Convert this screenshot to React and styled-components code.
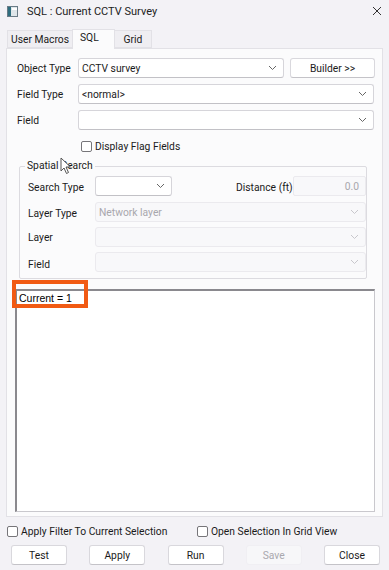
import React from 'react'
import styled, { createGlobalStyle } from 'styled-components'

const Global = createGlobalStyle`
	html, body {
		margin: 0;
		padding: 0;
		background: #f3f2f6;
	}
	body {
		font-family: Roboto, 'Noto Sans', sans-serif;
		font-size: 10.3px;
		color: #1a1a1a;
	}
`

const Window = styled.div`
	position: relative;
	width: 389px;
	height: 570px;
	background: #f3f2f6;
	display: flex;
	flex-direction: column;
	overflow: hidden;
`

const TitleBar = styled.div`
	height: 22px;
	display: flex;
	align-items: center;
	padding: 0 0 0 7px;
	gap: 9px;
	font-size: 11px;
	color: #222;
`

const TitleText = styled.span`
	flex: 1;
`

const CloseX = styled.div`
	width: 22px;
	display: flex;
	justify-content: center;
	margin-right: 1px;
`

const TabStrip = styled.div`
	display: flex;
	align-items: flex-end;
	padding: 7px 0 0 8px;
	height: 19px;
`

const Tab = styled.div`
	width: ${(p) => p.$w}px;
	height: ${(p) => (p.$active ? '20px' : '18px')};
	padding: ${(p) => (p.$active ? '1px 0 0 7px' : '0')};
	display: flex;
	align-items: ${(p) => (p.$active ? 'flex-start' : 'center')};
	justify-content: ${(p) => (p.$active ? 'flex-start' : 'center')};
	box-sizing: border-box;
	background: ${(p) => (p.$active ? '#fbfbfc' : '#efeef2')};
	border: 1px solid #e2e1e6;
	border-bottom: ${(p) => (p.$active ? 'none' : '1px solid #e2e1e6')};
	margin-left: -1px;
	margin-bottom: ${(p) => (p.$active ? '-1px' : '0')};
	position: relative;
	z-index: ${(p) => (p.$active ? 2 : 1)};
	white-space: nowrap;
`

const Panel = styled.div`
	margin: 0 6px;
	height: 469px;
	background: #fbfbfc;
	border: 1px solid #e2e1e6;
	box-sizing: border-box;
	padding: 9px 8px 0 10px;
	display: flex;
	flex-direction: column;
`

const Row = styled.div`
	display: flex;
	align-items: center;
	height: 20px;
	margin-bottom: ${(p) => p.$mb ?? 6}px;
`

const Label = styled.div`
	width: ${(p) => p.$w || 61}px;
	flex-shrink: 0;
	white-space: nowrap;
	padding-top: ${(p) => p.$pt || 0}px;
`

const SelectBox = styled.div`
	width: ${(p) => (p.$w ? `${p.$w}px` : 'auto')};
	flex: ${(p) => (p.$w ? '0 0 auto' : '1')};
	height: 20px;
	box-sizing: border-box;
	border: 1px solid ${(p) => (p.$disabled ? '#ebeaee' : '#d6d5da')};
	border-bottom-color: ${(p) => (p.$disabled ? '#ebeaee' : '#c2c1c6')};
	border-radius: 3px;
	background: ${(p) => (p.$disabled ? '#f8f8fa' : '#ffffff')};
	color: ${(p) => (p.$disabled ? '#a8a7ad' : '#1a1a1a')};
	display: flex;
	align-items: center;
	padding: 0 6px 0 3px;
	justify-content: space-between;
`

const Chevron = ({ disabled }) => (
	<svg width="9" height="6" viewBox="0 0 9 6">
		<path
			d="M1 1 L4.5 4.5 L8 1"
			fill="none"
			stroke={disabled ? '#c8c7cc' : '#666'}
			strokeWidth="1"
		/>
	</svg>
)

const Select = ({ w, disabled, children }) => (
	<SelectBox $w={w} $disabled={disabled}>
		<span>{children}</span>
		<Chevron disabled={disabled} />
	</SelectBox>
)

const Button = styled.div`
	width: ${(p) => p.$w || 56}px;
	height: 20px;
	box-sizing: border-box;
	border: 1px solid ${(p) => (p.$disabled ? '#f0eff3' : '#d9d8dd')};
	border-bottom-color: ${(p) => (p.$disabled ? '#f0eff3' : '#c4c3c8')};
	border-radius: 3px;
	background: ${(p) => (p.$disabled ? '#f7f7f9' : '#ffffff')};
	color: ${(p) => (p.$disabled ? '#a9a8ae' : '#1a1a1a')};
	display: flex;
	align-items: center;
	justify-content: center;
	flex-shrink: 0;
`

const CheckRow = styled.label`
	display: flex;
	align-items: center;
	gap: 3px;
`

const Box = styled.span`
	width: 11px;
	height: 11px;
	box-sizing: border-box;
	border: 1px solid #767579;
	border-radius: 2px;
	background: #fff;
	display: inline-block;
`

const Check = ({ children }) => (
	<CheckRow>
		<Box />
		{children}
	</CheckRow>
)

const Group = styled.fieldset`
	margin: 3px 0 0 2px;
	width: 348px;
	box-sizing: border-box;
	border: 1px solid #dcdbe0;
	border-radius: 2px;
	padding: 3px 0 0 8px;
	height: 120px;

	legend {
		padding: 0 2px;
		margin-left: -3px;
		line-height: 14px;
	}
`

const DistanceInput = styled.div`
	width: 73px;
	height: 20px;
	box-sizing: border-box;
	border: 1px solid #ebeaee;
	border-radius: 2px;
	background: #f8f8fa;
	color: #a8a7ad;
	display: flex;
	align-items: center;
	justify-content: flex-end;
	padding-right: 6px;
`

const Gap = styled.div`
	flex: ${(p) => (p.$w ? `0 0 ${p.$w}px` : '1')};
`

const EditorWrap = styled.div`
	position: relative;
	margin: 10px 0 0 -2px;
	width: 360px;
	height: 223px;
	box-sizing: border-box;
	background: #fff;
	border: 1px solid #c9c8cd;
	border-top: 2px solid #8a898e;
	border-left: 2px solid #8a898e;
	padding: 1px 2px;
	font-family: 'Liberation Sans', Arial, sans-serif;
	font-size: 10.5px;
	color: #000;
`

const Highlight = styled.div`
	position: absolute;
	left: -5px;
	top: -11px;
	width: 76px;
	height: 28px;
	box-sizing: border-box;
	border: 4px solid #f15a13;
`

const OptionsRow = styled.div`
	display: flex;
	align-items: center;
	padding: 8px 0 0 7px;
	& > :first-child {
		width: 190px;
	}
`

const ButtonRow = styled.div`
	display: flex;
	justify-content: space-between;
	padding: 7px 9px 0 11px;
`

const Cursor = styled.svg`
	position: absolute;
	left: 60px;
	top: 157px;
`

export default function App() {
	return (
		<Window>
			<Global />
			<TitleBar>
				<svg width="11" height="11" viewBox="0 0 11 11">
					<rect x="0.5" y="0.5" width="10" height="10" fill="#dfe6ea" stroke="#6a7b86" />
					<rect x="1" y="1" width="3" height="9" fill="#2f6d7e" />
					<rect x="5" y="2" width="5" height="2" fill="#fff" />
				</svg>
				<TitleText>SQL : Current CCTV Survey</TitleText>
				<CloseX>
					<svg width="10" height="10" viewBox="0 0 10 10">
						<path d="M1 1 L9 9 M9 1 L1 9" stroke="#333" strokeWidth="1" />
					</svg>
				</CloseX>
			</TitleBar>
			<TabStrip>
				<Tab $w={66}>User Macros</Tab>
				<Tab $active $w={43}>SQL</Tab>
				<Tab $w={38}>Grid</Tab>
			</TabStrip>
			<Panel>
				<Row>
					<Label>Object Type</Label>
					<Select w={206}>CCTV survey</Select>
					<Gap $w={6} />
					<Button $w={85}>Builder &gt;&gt;</Button>
				</Row>
				<Row>
					<Label>Field Type</Label>
					<Select>&lt;normal&gt;</Select>
				</Row>
				<Row>
					<Label>Field</Label>
					<Select />
				</Row>
				<Row $mb={0}>
					<Label $w={64} />
					<Check>Display Flag Fields</Check>
				</Row>
				<Group>
					<legend>Spatial Search</legend>
					<Row>
						<Label $w={67} $pt={2}>Search Type</Label>
						<Select w={77} />
						<Gap />
						<Label $w={57} $pt={2}>Distance (ft)</Label>
						<DistanceInput>0.0</DistanceInput>
					</Row>
					<Row $mb={5}>
						<Label $w={67} $pt={3}>Layer Type</Label>
						<Select disabled>Network layer</Select>
					</Row>
					<Row $mb={5}>
						<Label $w={67}>Layer</Label>
						<Select disabled />
					</Row>
					<Row $mb={0}>
						<Label $w={67} $pt={4}>Field</Label>
						<Select disabled />
					</Row>
				</Group>
				<EditorWrap>
					Current = 1
					<Highlight />
				</EditorWrap>
			</Panel>
			<OptionsRow>
				<Check>Apply Filter To Current Selection</Check>
				<Check>Open Selection In Grid View</Check>
			</OptionsRow>
			<ButtonRow>
				<Button>Test</Button>
				<Button>Apply</Button>
				<Button>Run</Button>
				<Button $disabled>Save</Button>
				<Button>Close</Button>
			</ButtonRow>
			<Cursor width="12" height="18" viewBox="0 0 12 18">
				<path
					d="M1 1 L1 14 L4 11 L6.5 16.5 L8.5 15.5 L6 10 L10.5 10 Z"
					fill="#fff"
					stroke="#555"
					strokeWidth="1"
					strokeLinejoin="round"
				/>
			</Cursor>
		</Window>
	)
}
